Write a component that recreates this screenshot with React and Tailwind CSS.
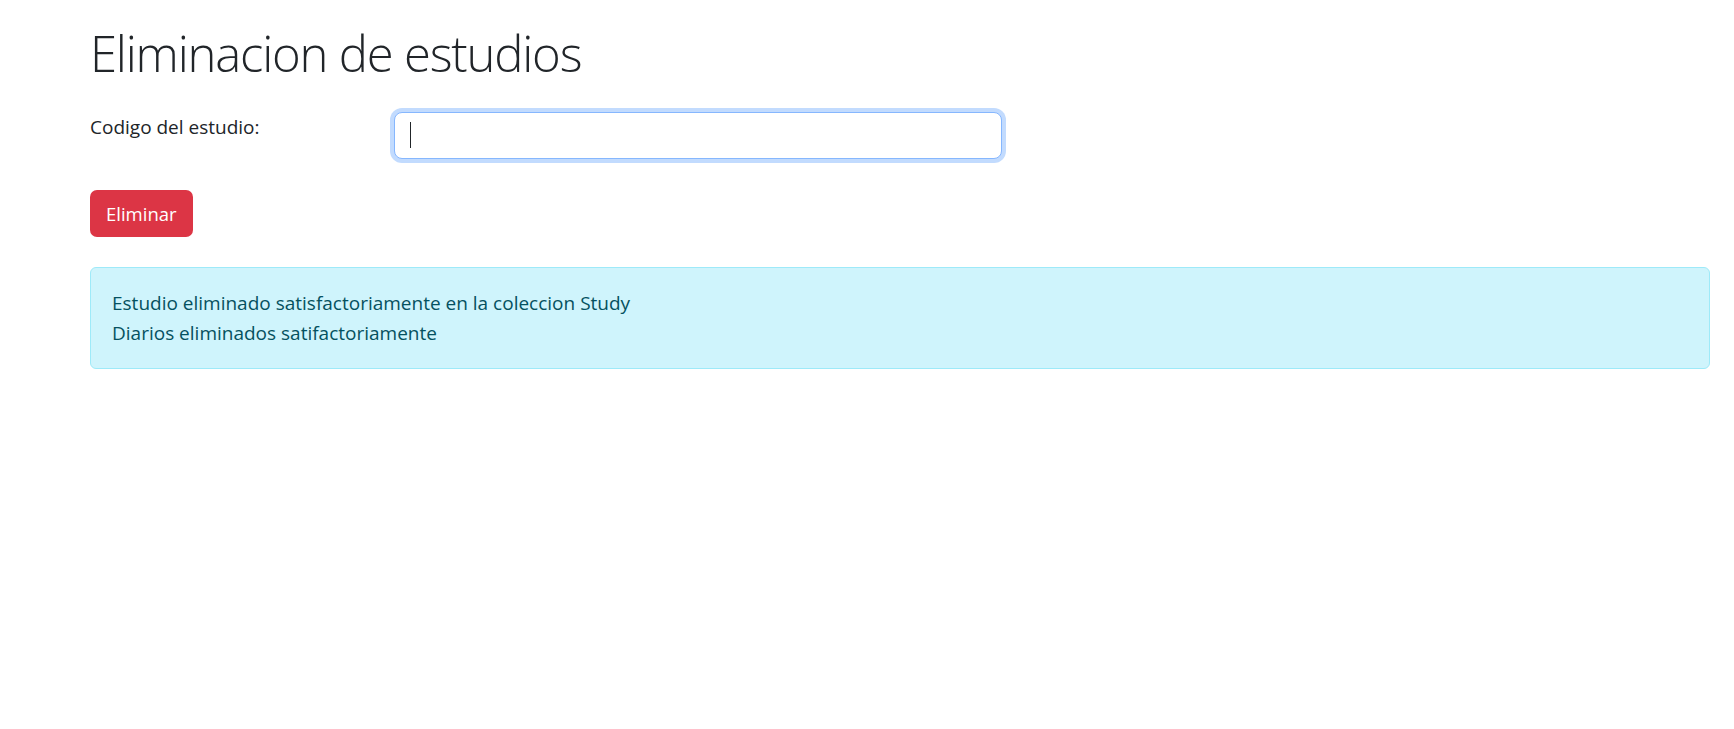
import React from 'react';

const App = () => {
  return (
    <div className="min-h-screen bg-white pl-[90px] pr-[24px] pt-[24px] font-['Open_Sans',sans-serif] text-[#212529]">
      {/* Title */}
      <h1 className="h-[59px] text-[49px] font-light leading-[59px] tracking-[-1.2px]">Eliminacion de estudios</h1>

      {/* Form row */}
      <div className="mt-[29px] flex items-start">
        <label className="w-[304px] pt-[2px] text-[19px] leading-[26px]">Codigo del estudio:</label>
        <div className="relative w-[608px]">
          <input
            type="text"
            className="h-[47px] w-full rounded-[8px] border border-[#86b7fe] bg-white px-4 text-[19px] shadow-[0_0_0_4px_rgba(13,110,253,0.25)] outline-none"
          />
          <span className="absolute left-[16px] top-[10px] h-[26px] w-px bg-[#212529]" />
        </div>
      </div>

      <button className="mt-[31px] h-[47px] rounded-[7px] bg-[#dc3545] px-4 text-[18.5px] leading-[27px] text-white">
        Eliminar
      </button>

      {/* Alert */}
      <div className="mt-[30px] rounded-[6px] border border-[#9eeaf9] bg-[#cff4fc] px-[21px] py-[20px] text-[19px] leading-[30px] text-[#055160]">
        <div>Estudio eliminado satisfactoriamente en la coleccion Study</div>
        <div>Diarios eliminados satifactoriamente</div>
      </div>
    </div>
  );
};

export default App;
